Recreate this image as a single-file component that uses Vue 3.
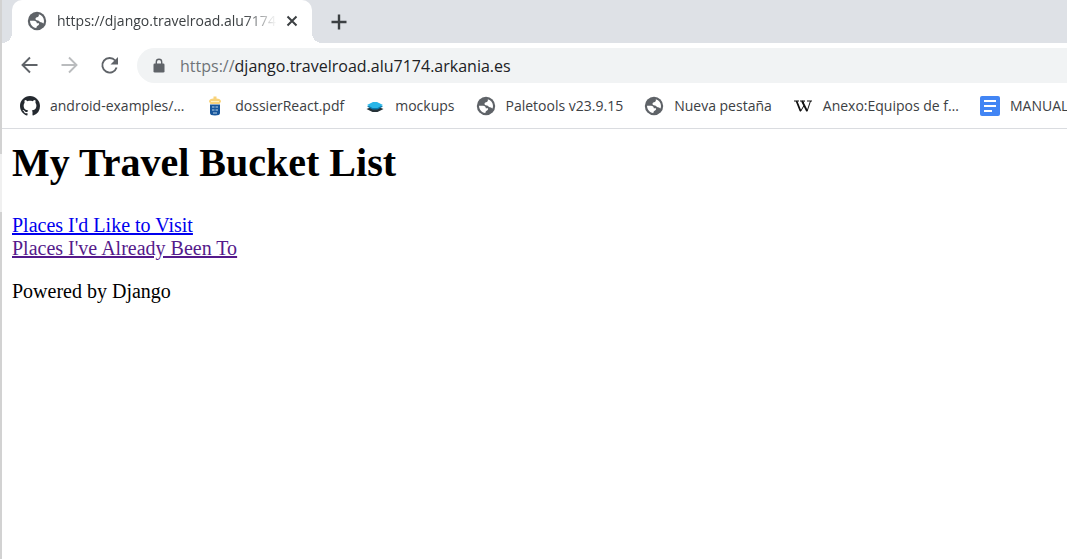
<script setup>
const bookmarks = [
  { icon: 'github', label: 'android-examples/…' },
  { icon: 'crest', label: 'dossierReact.pdf' },
  { icon: 'layers', label: 'mockups' },
  { icon: 'globe', label: 'Paletools v23.9.15' },
  { icon: 'globe', label: 'Nueva pestaña' },
  { icon: 'wiki', label: 'Anexo:Equipos de f…' },
  { icon: 'docs', label: 'MANUAL' },
]
</script>

<template>
  <div class="window">
    <svg class="defs" aria-hidden="true">
      <symbol id="globe" viewBox="0 0 20 20">
        <circle cx="10" cy="10" r="9.200" fill="#5f6368" />
        <path fill="#fff" d="M11.800 3.200C15 4 17 6.700 17 10c0 .9-.2 1.700-.5 2.500-.8-.3-1.200-1.300-2.500-1.300-1.800 0-1.600-1.700-3.200-1.700-1.500 0-2.300-.6-2.300-1.700 0-1.300 1.300-1.400 2.300-1.800 1-.5 1.200-1.300 1-2.800zM3 9.800h4c1.800 0 2.800.9 2.800 2.400h2.200c.5 1.800-.8 2.200-1.700 2.700-.6.400-.6 1.200-1.100 2.200C5.600 16.500 3 13.500 3 9.800z" />
      </symbol>
    </svg>

    <div class="edge"><span class="edge-thumb"></span></div>

    <div class="browser">
      <header class="tabs">
        <div class="tab">
          <svg class="icon" aria-hidden="true"><use href="#globe" /></svg>
          <span class="tab-title">https://django.travelroad.alu7174.arkania.es</span>
          <button class="tab-close" aria-label="Close tab">
            <svg width="12" height="12" viewBox="0 0 12 12"><path d="M1.500 1.500l9 9M10.500 1.500l-9 9" stroke="#3c4043" stroke-width="2" /></svg>
          </button>
        </div>
        <button class="new-tab" aria-label="New tab">
          <svg width="16" height="16" viewBox="0 0 16 16"><path d="M8 .5v15M.5 8h15" stroke="#3c4043" stroke-width="2.400" /></svg>
        </button>
      </header>

      <nav class="toolbar" aria-label="Navigation">
        <button class="nav" aria-label="Back">
          <svg width="20" height="20" viewBox="0 0 20 20"><path d="M18.500 9H4M11 1.500L3.500 9l7.500 7.500" fill="none" stroke="#5f6368" stroke-width="1.900" /></svg>
        </button>
        <button class="nav" aria-label="Forward">
          <svg width="20" height="20" viewBox="0 0 20 20"><path d="M2.500 9h14.500M10 1.500L17.500 9 10 16.500" fill="none" stroke="#babcbe" stroke-width="1.900" /></svg>
        </button>
        <button class="nav" aria-label="Reload">
          <svg width="20" height="20" viewBox="0 0 20 20"><path d="M16.200 4.500A7.300 7.300 0 1 0 17.600 11.500" fill="none" stroke="#5f6368" stroke-width="1.900" /><path d="M19 1v7.500h-7.500z" fill="#5f6368" /></svg>
        </button>
        <label class="omnibox">
          <svg width="12" height="16" viewBox="0 0 12 16" aria-hidden="true"><path d="M3.300 7V4a2.700 2.700 0 0 1 5.400 0v3" fill="none" stroke="#5f6368" stroke-width="1.400" /><rect x=".5" y="5.500" width="11" height="9" rx="1.300" fill="#5f6368" /></svg>
          <span class="url"><span class="scheme">https://</span>django.travelroad.alu7174.arkania.es</span>
        </label>
      </nav>

      <nav class="bookmarks" aria-label="Bookmarks">
        <a v-for="b in bookmarks" :key="b.label" class="bookmark" href="#">
          <svg v-if="b.icon === 'github'" class="icon" viewBox="0 0 16 16"><path fill="#24292f" d="M8 0C3.580 0 0 3.580 0 8c0 3.540 2.290 6.530 5.470 7.590.4.070.55-.17.55-.38 0-.19-.010-.82-.010-1.490-2.010.37-2.530-.49-2.690-.94-.090-.23-.48-.94-.82-1.130-.28-.15-.68-.52-.010-.53.630-.010 1.080.58 1.230.82.720 1.210 1.870.87 2.330.66.070-.52.280-.87.510-1.070-1.780-.2-3.640-.89-3.640-3.950 0-.87.310-1.590.820-2.150-.080-.2-.36-1.020.080-2.120 0 0 .67-.21 2.200.82.640-.18 1.320-.27 2-.27s1.360.090 2 .27c1.530-1.040 2.200-.82 2.200-.82.440 1.100.160 1.920.080 2.120.510.560.820 1.270.820 2.150 0 3.070-1.870 3.750-3.650 3.950.290.250.540.730.540 1.480 0 1.070-.010 1.930-.010 2.200 0 .210.150.460.550.380A8.010 8.010 0 0 0 16 8c0-4.420-3.580-8-8-8z" /></svg>
          <svg v-else-if="b.icon === 'crest'" class="icon" viewBox="0 0 20 20">
            <path fill="#f8d27a" d="M8.500.5h3v2C14 2.500 16 3.500 16 5.500L14.500 8h-9L4 5.500c0-2 2-3 4.500-3z" />
            <path d="M6 5.500h8" stroke="#fff1c4" />
            <path fill="#17569b" d="M5 8.500h10V17c0 2-2 2.200-5 2.500-3-.3-5-.5-5-2.500z" />
            <path stroke="#b9d2e8" stroke-width="1.200" d="M7 11h2.500M10.500 11H13M7 14h2.500M10.500 14H13M8 17h4" />
          </svg>
          <svg v-else-if="b.icon === 'layers'" class="icon" viewBox="0 0 20 20">
            <path fill="#263238" d="M1.500 13L10 9.500l8.500 3.500-6 3h-5z" />
            <path fill="#0879ad" d="M2 10.500L10 8l8 2.500-5.500 3h-5z" />
            <path fill="#29b6e8" d="M2 9l6-3h4l6 3-5.500 3h-5z" />
          </svg>
          <svg v-else-if="b.icon === 'globe'" class="icon"><use href="#globe" /></svg>
          <svg v-else-if="b.icon === 'wiki'" class="icon" viewBox="0 0 20 20"><path fill="none" stroke="#111" d="M1 5h5M7 5h5M14 5h5" /><path fill="none" stroke="#111" stroke-width="1.800" d="M3.500 5l4 10M9 5l5 10" /><path fill="none" stroke="#111" d="M7.500 15.500l3.500-6M11 5.500l-1 2M14 15.500L17.500 5" /></svg>
          <svg v-else class="icon" viewBox="0 0 20 20"><rect width="20" height="20" rx="2" fill="#4285f4" /><path stroke="#fff" stroke-width="2" d="M4 5h12M4 10h12M4 15h8" /></svg>
          <span class="label">{{ b.label }}</span>
        </a>
      </nav>

      <main class="page">
        <h1>My Travel Bucket List</h1>
        <a class="place" href="#">Places I'd Like to Visit</a>
        <a class="place visited" href="#">Places I've Already Been To</a>
        <p>Powered by Django</p>
      </main>
    </div>
  </div>
</template>

<style>
body {
  margin: 0;
  background: #fff;
}
</style>

<style scoped>
.window {
  display: flex;
  min-height: 100vh;
  overflow: hidden;
  font-family: "Open Sans", sans-serif;
  font-size: 14px;
  color: #3c4043;
}
.defs {
  position: absolute;
  width: 0;
  height: 0;
}
.edge {
  flex: none;
  width: 2px;
  padding-top: 154px;
  box-sizing: border-box;
  background: #d2d2d2;
}
.edge-thumb {
  display: block;
  height: 58px;
  background: #f0f0f0;
}
.browser {
  flex: 1;
  min-width: 0;
}
button {
  display: flex;
  align-items: center;
  justify-content: center;
  padding: 0;
  border: 0;
  background: none;
}
.icon {
  flex: none;
  width: 20px;
  height: 20px;
}
.tabs {
  display: flex;
  height: 43px;
  padding-left: 10px;
  background: #dee1e6;
}
.tab {
  position: relative;
  display: flex;
  align-items: center;
  box-sizing: border-box;
  width: 300px;
  padding: 0 11px 2px 15px;
  border-radius: 10px 10px 0 0;
  background: #fff;
}
.tab::before,
.tab::after {
  content: "";
  position: absolute;
  bottom: 0;
  width: 10px;
  height: 10px;
}
.tab::before {
  right: 100%;
  background: radial-gradient(circle at 0 0, transparent 10px, #fff 10px);
}
.tab::after {
  left: 100%;
  background: radial-gradient(circle at 100% 0, transparent 10px, #fff 10px);
}
.tab-title {
  flex: 1;
  margin-left: 10px;
  overflow: hidden;
  white-space: nowrap;
  mask-image: linear-gradient(to right, #000 85%, transparent);
}
.tab-close {
  width: 18px;
  height: 18px;
  margin-left: 6px;
}
.new-tab {
  width: 34px;
  margin-left: 10px;
}
.toolbar {
  display: flex;
  align-items: center;
  height: 45px;
  padding-left: 17px;
}
.nav {
  width: 20px;
  height: 20px;
  margin-right: 20px;
}
.omnibox {
  display: flex;
  flex: 1;
  align-items: center;
  gap: 15px;
  height: 35px;
  margin-left: -2px;
  padding-left: 16px;
  border-radius: 18px 0 0 18px;
  background: #f1f3f4;
}
.url {
  font-size: 16px;
  color: #202124;
}
.scheme {
  color: #6f7378;
}
.bookmarks {
  display: flex;
  gap: 21px;
  height: 40px;
  padding-left: 18px;
  overflow: hidden;
  border-bottom: 1px solid #dadce0;
}
.bookmark {
  display: flex;
  flex: none;
  align-items: center;
  gap: 10px;
  height: 36px;
  color: #3c4043;
  text-decoration: none;
  white-space: nowrap;
}
.label {
  padding-bottom: 2px;
}
.page {
  padding: 11px 10px;
  font-family: "Liberation Serif", serif;
  font-size: 20px;
  line-height: 23px;
  color: #000;
}
h1 {
  margin: 0 0 28px;
  font-size: 40px;
  line-height: 46px;
}
.place {
  display: table;
  color: #00e;
}
.place.visited {
  color: #551a8b;
}
p {
  margin: 20px 0 0;
}
</style>
